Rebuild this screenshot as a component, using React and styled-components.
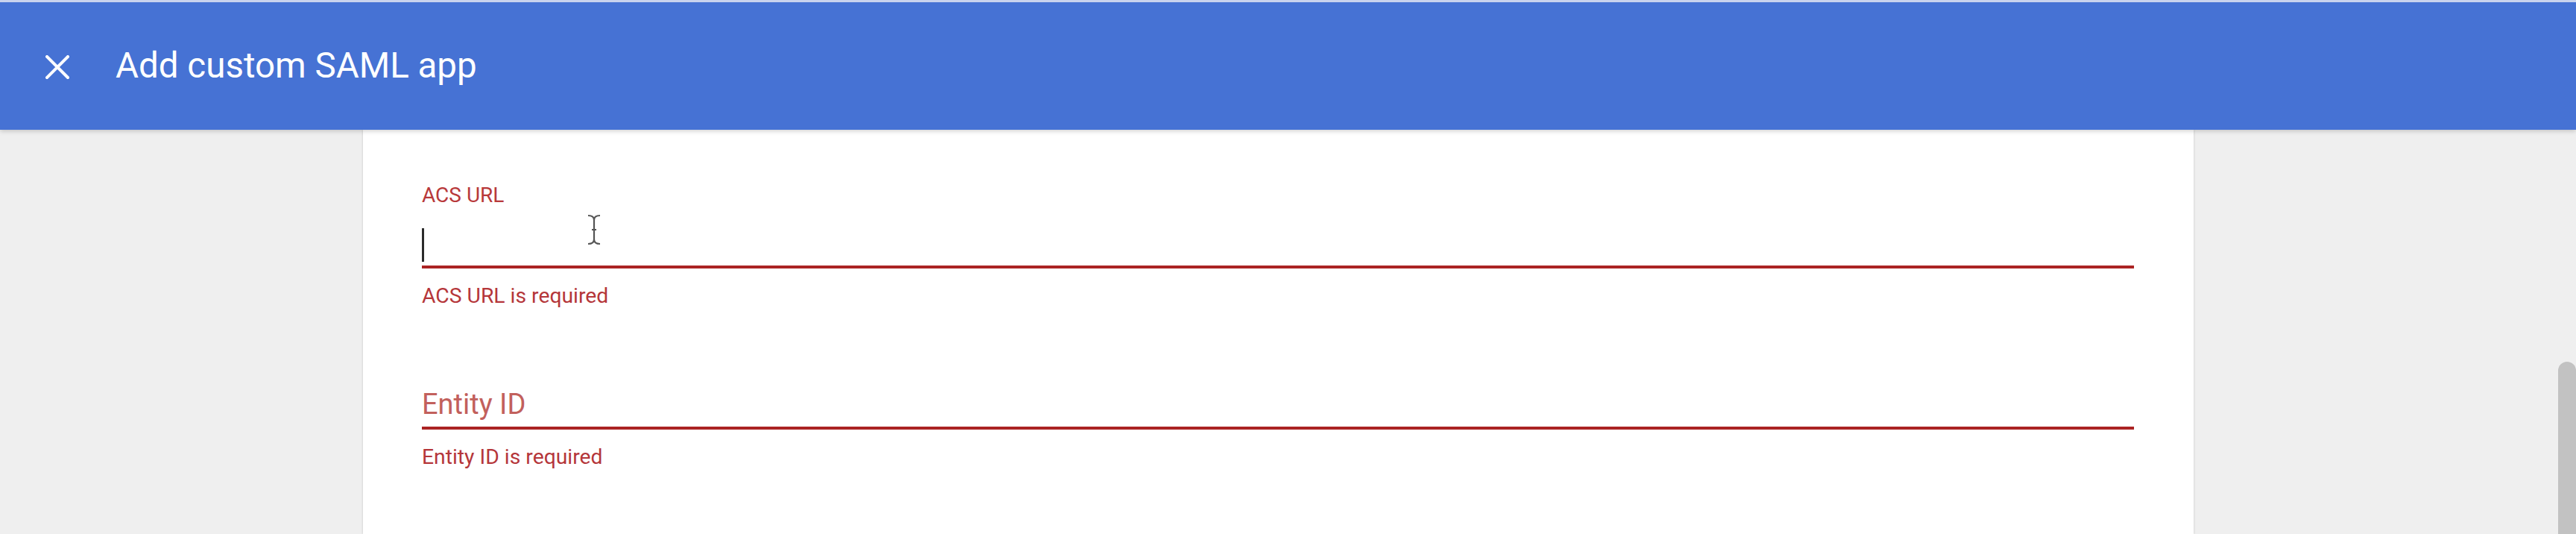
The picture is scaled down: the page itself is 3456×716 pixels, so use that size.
import styled, { createGlobalStyle } from "styled-components";

const GlobalStyle = createGlobalStyle`
  html, body {
    margin: 0;
    padding: 0;
    background: #efefef;
    font-family: Roboto, "Liberation Sans", Arial, sans-serif;
    overflow: hidden;
  }
`;

// Styled Components
const Page = styled.div`
  position: relative;
  height: 716px;
  display: flex;
  flex-direction: column;
  background-color: #efefef;
  overflow: hidden;
`;

const Header = styled.header`
  flex: 0 0 auto;
  height: 171px;
  border-top: 3px solid #c9d3ee;
  background-color: #4672d4;
  display: flex;
  align-items: center;
  position: relative;
  z-index: 2;
  box-shadow: 0 2px 6px rgba(0, 0, 0, 0.18);
`;

const CloseButton = styled.button`
  width: 32px;
  height: 32px;
  margin-left: 61px;
  margin-top: 2px;
  padding: 0;
  border: none;
  background: transparent;
  display: flex;
  align-items: center;
  justify-content: center;
  cursor: pointer;
`;

const Title = styled.h1`
  margin: 0 0 0 62px;
  font-size: 47.5px;
  font-weight: 400;
  color: #ffffff;
  line-height: 1;
`;

const Body = styled.main`
  flex: 1;
  display: flex;
  justify-content: flex-start;
  padding-left: 487px;
`;

const Card = styled.section`
  width: 2456px;
  background-color: #ffffff;
  box-shadow: 0 0 3px rgba(0, 0, 0, 0.18);
  padding: 72px 80px 0 79px;
  box-sizing: border-box;
  display: flex;
  flex-direction: column;
  gap: 49px;
`;

const Field = styled.div`
  display: flex;
  flex-direction: column;
`;

const Label = styled.label`
  height: 32px;
  font-size: 28px;
  line-height: 32px;
  color: #b8393b;
`;

const InputBox = styled.div`
  height: 82px;
  box-sizing: border-box;
  border-bottom: 4px solid #ab2323;
  display: flex;
  align-items: flex-end;
  padding-bottom: ${(p) => p.$pad}px;
`;

const Caret = styled.span`
  width: 3px;
  height: 45px;
  background-color: #2b2b2b;
`;

const Placeholder = styled.span`
  font-size: 38px;
  line-height: 44px;
  color: #c2605c;
`;

const ErrorText = styled.div`
  margin-top: 21px;
  font-size: 28.3px;
  line-height: 32px;
  color: #b5363a;
`;

const MouseCursor = styled.svg`
  position: absolute;
  left: 786px;
  top: 287px;
`;

const ScrollThumb = styled.div`
  position: absolute;
  right: 0;
  top: 485px;
  bottom: 0;
  width: 24px;
  background-color: #c2c2c2;
  border-radius: 12px 12px 0 0;
`;

function CloseIcon() {
  return (
    <svg width="32" height="32" viewBox="0 0 32 32">
      <path
        d="M2 2 L30 30 M30 2 L2 30"
        stroke="#ffffff"
        strokeWidth="4"
        strokeLinecap="square"
      />
    </svg>
  );
}

function IBeam() {
  return (
    <MouseCursor width="22" height="42" viewBox="0 0 22 42">
      <path
        d="M3 2 Q11 2 11 8 Q11 2 19 2 M11 8 L11 34 M3 40 Q11 40 11 34 Q11 40 19 40 M8 21 L14 21"
        stroke="#555"
        strokeWidth="2.2"
        fill="none"
      />
    </MouseCursor>
  );
}

export default function App() {
  return (
    <Page>
      <GlobalStyle />
      <Header>
        <CloseButton aria-label="Close">
          <CloseIcon />
        </CloseButton>
        <Title>Add custom SAML app</Title>
      </Header>
      <Body>
        <Card>
          <Field>
            <Label>ACS URL</Label>
            <InputBox $pad={5}>
              <Caret />
            </InputBox>
            <ErrorText>ACS URL is required</ErrorText>
          </Field>
          <Field>
            <Label />
            <InputBox $pad={8}>
              <Placeholder>Entity ID</Placeholder>
            </InputBox>
            <ErrorText>Entity ID is required</ErrorText>
          </Field>
        </Card>
      </Body>
      <IBeam />
      <ScrollThumb />
    </Page>
  );
}
